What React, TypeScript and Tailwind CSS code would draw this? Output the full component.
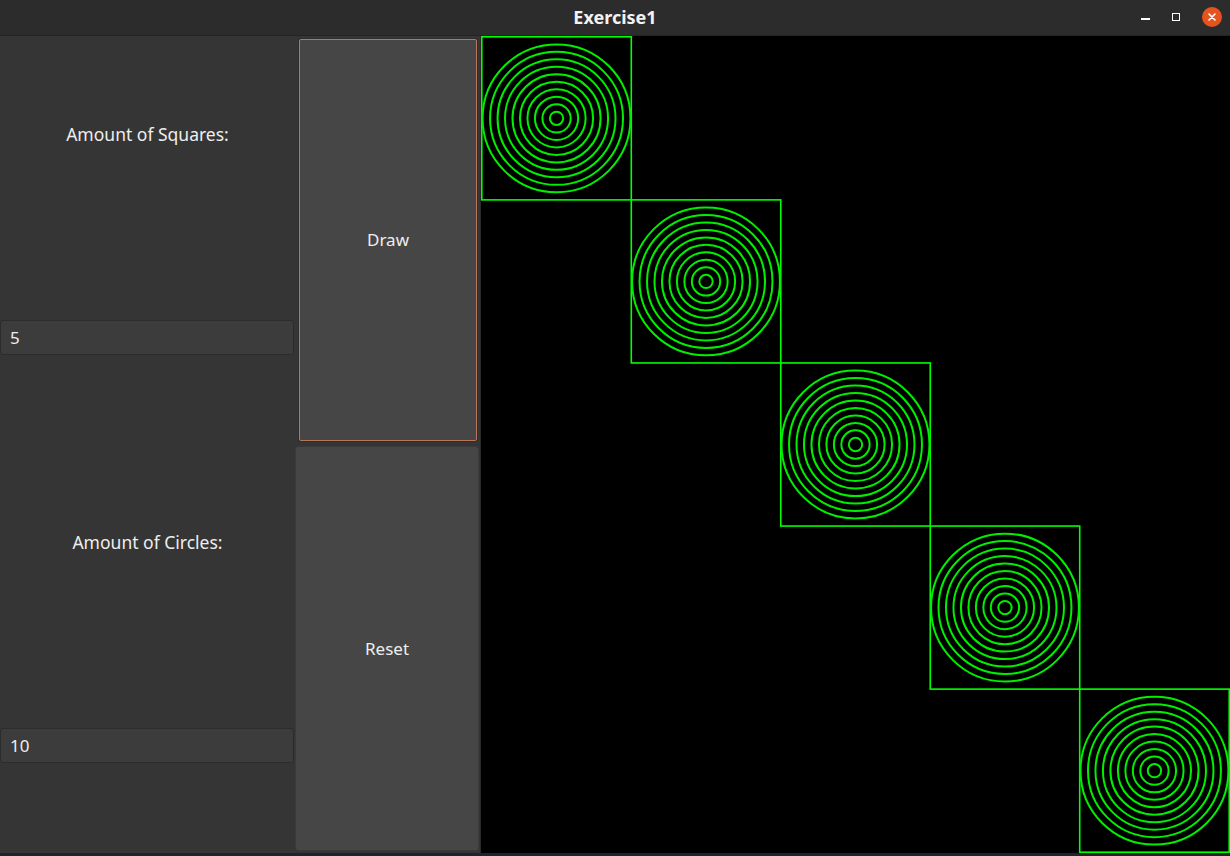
import React from "react";

const W = 749;
const H = 817;
const COUNT = 5;
const RINGS = 10;

function Drawing() {
  const sw = (W - 1.6) / COUNT;
  const sh = (H - 1.6) / COUNT;
  const r = Math.min(sw, sh) / 2;
  return (
    <svg width={W} height={H} className="block">
      {Array.from({ length: COUNT }).map((_, i) => {
        const x = i * sw + 0.8;
        const y = i * sh + 0.8;
        const cx = x + sw / 2;
        const cy = y + sh / 2;
        return (
          <g key={i}>
            <rect x={x} y={y} width={sw} height={sh} fill="none" stroke="#00ff00" strokeWidth={1.6} />
            {Array.from({ length: RINGS }).map((_, k) => (
              <circle key={k} cx={cx} cy={cy} r={(r * (k + 1)) / RINGS - 0.8} fill="none" stroke="#00ee00" strokeWidth={2} />
            ))}
          </g>
        );
      })}
    </svg>
  );
}

function Field({ value }: { value: string }) {
  return (
    <div className="h-[35px] w-[294px] rounded-[3px] border border-[#2c2c2c] bg-[#3c3c3c] px-[9px] flex items-center text-[17px] text-[#eeeeee]">
      {value}
    </div>
  );
}

export default function App() {
  return (
    <div className="w-[1230px] h-[856px] flex flex-col bg-[#1c2529] overflow-hidden" style={{ fontFamily: '"Noto Sans", "Open Sans", sans-serif' }}>
      {/* Title bar */}
      <div className="h-[36px] bg-[#2c2c2c] border-b border-[#232323] flex items-center relative">
        <div className="flex-1 text-center font-bold text-[18px] text-[#f2f2f2]">Exercise1</div>
        <div className="absolute right-[8px] top-0 h-[34px] flex items-center gap-[22px]">
          <div className="w-[9px] h-[1.5px] bg-white mt-[4px]" />
          <div className="w-[8px] h-[8px] border-[1.5px] border-white" />
          <div className="w-[20px] h-[20px] rounded-full bg-[#e5541f] flex items-center justify-center">
            <svg width="10" height="10" viewBox="0 0 10 10">
              <path d="M2 2 L8 8 M8 2 L2 8" stroke="white" strokeWidth="1.6" strokeLinecap="round" />
            </svg>
          </div>
        </div>
      </div>

      {/* Body */}
      <div className="h-[817px] flex bg-[#353535]">
        {/* Inputs column */}
        <div className="w-[295px] flex flex-col text-[17.5px] text-[#eeeeee]">
          <div className="h-[196px] flex items-center justify-center">Amount of Squares:</div>
          <div className="h-[88px]" />
          <Field value="5" />
          <div className="h-[89px]" />
          <div className="h-[196px] flex items-center justify-center">Amount of Circles:</div>
          <div className="h-[88px]" />
          <Field value="10" />
        </div>

        {/* Buttons column */}
        <div className="w-[186px] flex flex-col text-[17px] text-[#eeeeee] pr-[1px] border-r border-[#2a2a2a]">
          <div className="mt-[2px] ml-[3px] mr-[1px] h-[404px] rounded-[3px] border border-[#2e2e2e]">
            <div className="h-full rounded-[2px] border border-[#b9765b] bg-[#464646] flex items-center justify-center">Draw</div>
          </div>
          <div className="mt-[4px] h-[405px] rounded-[3px] border border-[#3a3a3a] bg-[#464646] flex items-center justify-center">Reset</div>
        </div>

        {/* Canvas */}
        <div className="w-[749px] bg-black">
          <Drawing />
        </div>
      </div>
    </div>
  );
}
